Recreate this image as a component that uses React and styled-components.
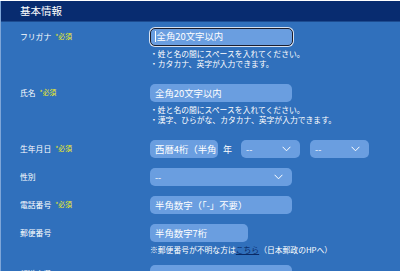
import React from "react";
import styled, { createGlobalStyle } from "styled-components";

const Global = createGlobalStyle`
  html, body { margin: 0; padding: 0; background: #ffffff; }
  body { font-family: "Noto Sans CJK JP", "Noto Sans", sans-serif; overflow: hidden; }
  * { box-sizing: border-box; }
`;

const Panel = styled.section`
  margin-top: 1px;
  width: 400px;
  height: 270px;
  background: #3070bc;
  border-left: 1px solid #7ea6d8;
  overflow: hidden;
`;

const Header = styled.h2`
  margin: 0;
  height: 21px;
  background: #082c70;
  border-bottom: 1px solid #1d4c90;
  color: #ffffff;
  font-size: 10.5px;
  font-weight: normal;
  line-height: 20px;
  padding-left: 19px;
`;

const Body = styled.div`
  padding: 6px 0 0 19px;
  display: flex;
  flex-direction: column;
  gap: 10px;
`;

const Row = styled.div`
  display: grid;
  grid-template-columns: 130px 1fr;
  align-items: start;
`;

const Label = styled.div`
  color: #ffffff;
  font-size: 7.8px;
  height: 18px;
  display: flex;
  align-items: center;
  padding-bottom: 2px;
`;

const Req = styled.span`
  color: #f2ee22;
  font-size: 6.8px;
  margin-left: 4px;
`;

const Field = styled.div`
  display: flex;
  flex-direction: column;
`;

const Inline = styled.div`
  display: flex;
  align-items: center;
`;

const Input = styled.div`
  width: ${(p) => p.$w}px;
  flex: none;
  height: 18px;
  border-radius: 5px;
  background: #6a9ee0;
  color: #ffffff;
  font-size: 9.4px;
  line-height: 18px;
  padding-left: 5px;
  white-space: nowrap;
  overflow: hidden;
  ${(p) =>
    p.$focus &&
    `
    border: 1.5px solid #1b1d2c;
    box-shadow: 0 0 0 1px #d8e2f0;
    line-height: 15px;
    padding-left: 3.5px;
  `}
`;

const Caret = styled.span`
  display: inline-block;
  width: 1px;
  height: 11px;
  background: #ffffff;
  vertical-align: middle;
  margin-right: 1px;
  position: relative;
  top: -1px;
`;

const Select = styled.div`
  width: ${(p) => p.$w}px;
  flex: none;
  height: 18px;
  border-radius: 5px;
  background: #6a9ee0;
  color: #ffffff;
  font-size: 9px;
  padding: 0 9px 0 5px;
  display: flex;
  align-items: center;
  justify-content: space-between;
  margin-left: ${(p) => p.$ml || 0}px;
`;

const Unit = styled.span`
  color: #ffffff;
  font-size: 9px;
  margin: 0 9px 0 5px;
`;

const Hints = styled.div`
  margin-top: 3px;
  margin-bottom: 5px;
  color: #ffffff;
  font-size: 7.8px;
  line-height: 10px;
`;

const Note = styled.div`
  margin-top: 3px;
  color: #ffffff;
  font-size: 7.8px;
  line-height: 10px;
`;

const Link = styled.a`
  color: #0a2a66;
  text-decoration: underline;
`;

const Chevron = () => (
  <svg width="9" height="6" viewBox="0 0 9 6" fill="none">
    <path d="M0.6 0.8 L4.5 4.8 L8.4 0.8" stroke="#ffffff" strokeWidth="1" />
  </svg>
);

export default function App() {
  return (
    <>
      <Global />
      <Panel>
        <Header>基本情報</Header>
        <Body>
          <Row>
            <Label>
              フリガナ<Req>*必須</Req>
            </Label>
            <Field>
              <Input $w={143} $focus>
                <Caret />
                全角20文字以内
              </Input>
              <Hints>
                ・姓と名の間にスペースを入れてください。
                <br />
                ・カタカナ、英字が入力できます。
              </Hints>
            </Field>
          </Row>
          <Row>
            <Label>
              氏名<Req>*必須</Req>
            </Label>
            <Field>
              <Input $w={142}>全角20文字以内</Input>
              <Hints>
                ・姓と名の間にスペースを入れてください。
                <br />
                ・漢字、ひらがな、カタカナ、英字が入力できます。
              </Hints>
            </Field>
          </Row>
          <Row>
            <Label>
              生年月日<Req>*必須</Req>
            </Label>
            <Inline>
              <Input $w={68}>西暦4桁（半角</Input>
              <Unit>年</Unit>
              <Select $w={59}>
                --
                <Chevron />
              </Select>
              <Select $w={59} $ml={10}>
                --
                <Chevron />
              </Select>
            </Inline>
          </Row>
          <Row>
            <Label>性別</Label>
            <Select $w={142}>
              --
              <Chevron />
            </Select>
          </Row>
          <Row>
            <Label>
              電話番号<Req>*必須</Req>
            </Label>
            <Input $w={142}>半角数字（「-」不要）</Input>
          </Row>
          <Row>
            <Label>郵便番号</Label>
            <Field>
              <Input $w={98}>半角数字7桁</Input>
              <Note>
                ※郵便番号が不明な方は<Link href="#">こちら</Link>（日本郵政のHPへ）
              </Note>
            </Field>
          </Row>
          <Row>
            <Label>都道府県</Label>
            <Select $w={142}>
              --
              <Chevron />
            </Select>
          </Row>
        </Body>
      </Panel>
    </>
  );
}
